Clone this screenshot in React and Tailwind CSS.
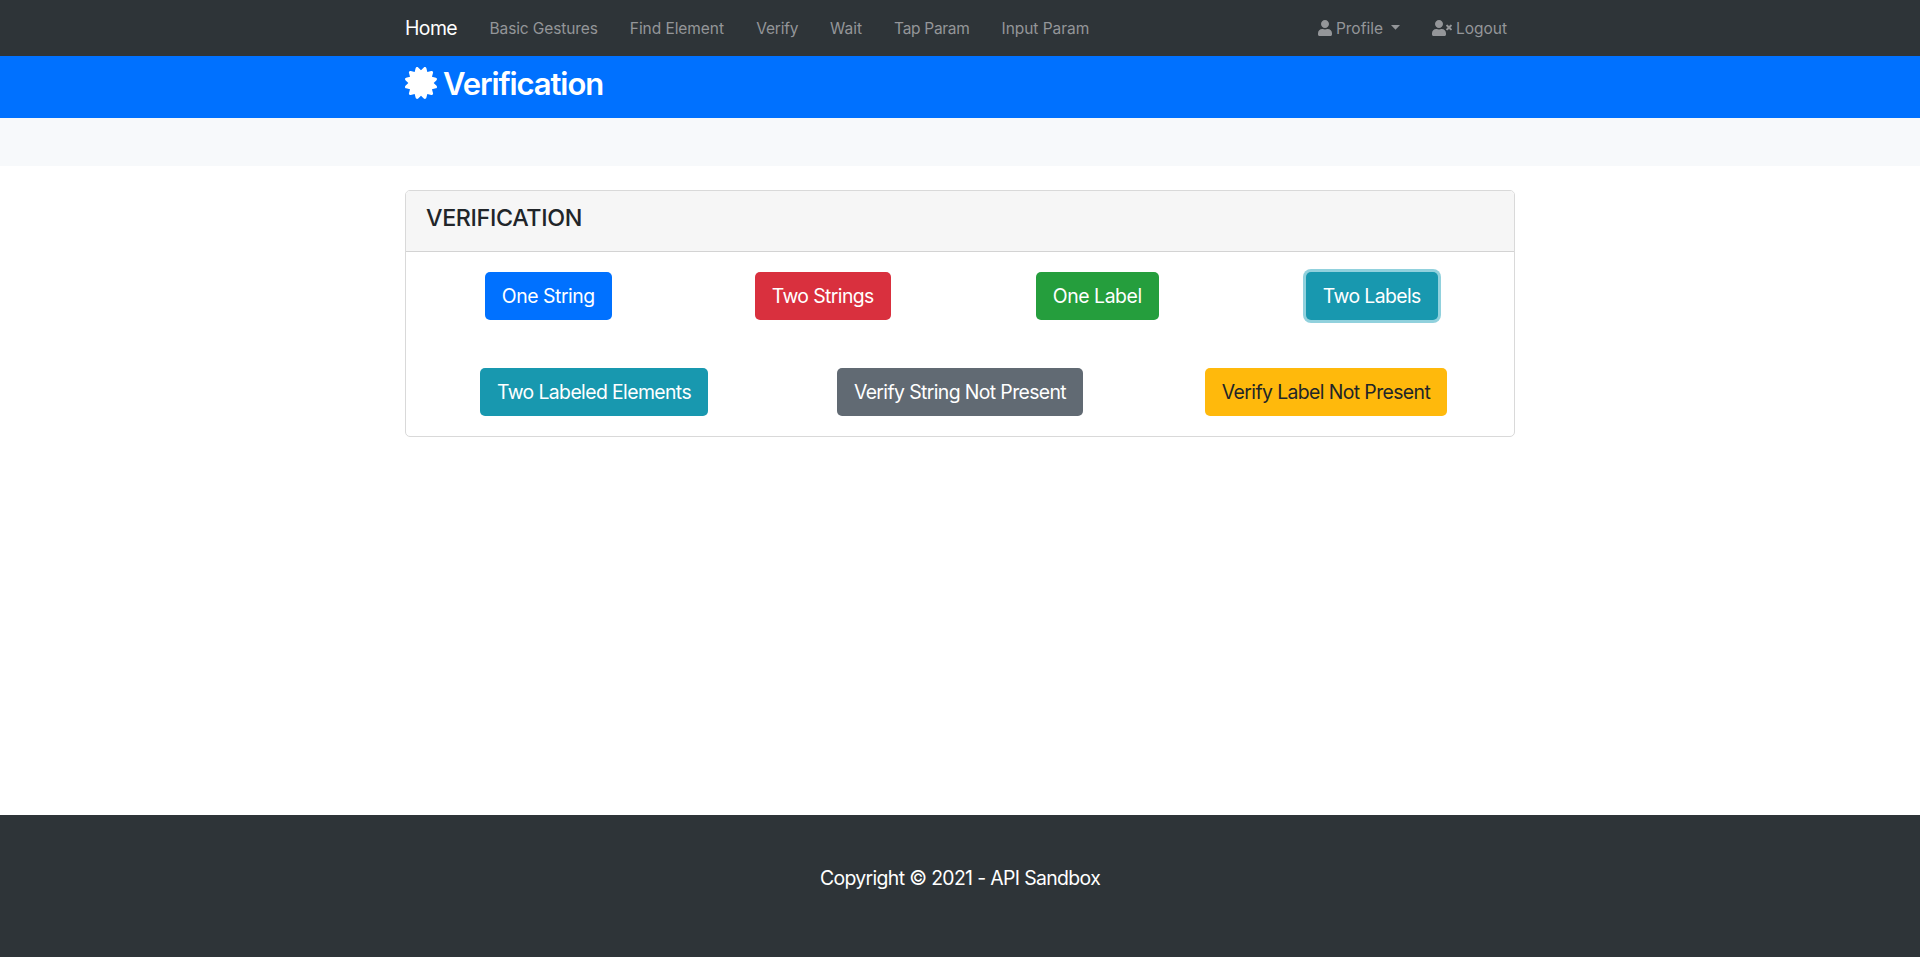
import { FaCertificate, FaUser, FaUserTimes } from "react-icons/fa";

const navLinks = [
  { label: "Basic Gestures", style: "w-[108.3px] tracking-[-0.11px]" },
  { label: "Find Element", style: "w-[94.5px] tracking-[-0.06px]" },
  { label: "Verify", style: "w-[41.8px] tracking-[-0.23px]" },
  { label: "Wait", style: "w-[32px]" },
  { label: "Tap Param", style: "w-[75.5px] tracking-[-0.3px]" },
  { label: "Input Param", style: "w-[88.2px] tracking-[-0.05px]" },
];

const topButtons = [
  { label: "One String", style: "w-[127px] bg-[#0071ff] text-white tracking-[-0.45px]" },
  { label: "Two Strings", style: "w-[136px] bg-[#d9303e] text-white tracking-[-0.6px]" },
  { label: "One Label", style: "w-[123px] bg-[#259e3d] text-white tracking-[-0.42px]" },
  {
    label: "Two Labels",
    style: "w-[132px] bg-[#1898af] text-white tracking-[-0.59px] ring-3 ring-[#91d1dd]",
  },
];

const bottomButtons = [
  { label: "Two Labeled Elements", style: "w-[228px] bg-[#1898af] text-white tracking-[-0.6px]" },
  { label: "Verify String Not Present", style: "w-[246px] bg-[#616a73] text-white tracking-[-0.61px]" },
  { label: "Verify Label Not Present", style: "w-[242px] bg-[#ffb90c] text-[#212529] tracking-[-0.6px]" },
];

function Button({ label, style }) {
  return (
    <div className="flex justify-center">
      <button type="button" className={`h-12 rounded-[5px] text-center text-[19.4px] leading-[48px] whitespace-nowrap ${style}`}>
        {label}
      </button>
    </div>
  );
}

export default function App() {
  return (
    <div className="flex h-[957px] flex-col bg-white font-['Inter',sans-serif] text-[#212529]">
      <nav className="h-14 bg-[#2e3438]">
        <div className="mx-auto flex h-full w-[1110px] items-center text-[15.5px] whitespace-nowrap text-[#949699]">
          <a className="mr-8 w-[52.5px] pt-0.5 text-[19.4px] tracking-[-0.55px] text-white">Home</a>
          <div className="flex gap-8 pt-0.5">
            {navLinks.map((link) => (
              <a key={link.label} className={link.style}>{link.label}</a>
            ))}
          </div>
          <div className="mr-2 ml-auto flex items-center">
            <a className="flex items-center">
              <FaUser className="mr-1 h-4 w-3.5" />
              <span className="w-[47px] pt-0.5">Profile</span>
              <svg className="mt-[-2px] ml-2 h-[5px] w-[9px]" viewBox="0 0 9 5" fill="currentColor">
                <path d="M0 0h9L4.5 4.8z" />
              </svg>
            </a>
            <a className="ml-8 flex items-center">
              <FaUserTimes className="mr-1 h-4 w-5" />
              <span className="pt-0.5">Logout</span>
            </a>
          </div>
        </div>
      </nav>

      <header className="h-[62px] bg-[#0071ff] text-white">
        <div className="mx-auto flex w-[1110px] items-start pt-[11px]">
          <FaCertificate className="size-8" />
          <h1 className="mt-[-2px] ml-1.5 text-[31px] leading-[38px] font-semibold tracking-[-1.1px]">Verification</h1>
        </div>
      </header>
      <div className="h-12 bg-[#f7f9fb]" />

      <main className="grow pt-6">
        <section className="mx-auto h-[247px] w-[1110px] rounded-[5px] border border-[#d9d9d9]">
          <div className="h-[61px] rounded-t-[4px] border-b border-[#d3d3d3] bg-[#f6f6f6] px-5 pt-3">
            <h4 className="text-[23.3px] leading-[29px] font-medium tracking-[-0.35px]">VERIFICATION</h4>
          </div>
          <div className="px-[5px] pt-5">
            <div className="grid grid-cols-4">
              {topButtons.map((b) => <Button key={b.label} {...b} />)}
            </div>
            <div className="mt-12 grid grid-cols-3">
              {bottomButtons.map((b) => <Button key={b.label} {...b} />)}
            </div>
          </div>
        </section>
      </main>

      <footer className="h-[142px] bg-[#2e3438] pt-12 text-center text-[19.4px] leading-[30px] tracking-[-0.63px] text-white">
        Copyright © 2021 - API Sandbox
      </footer>
    </div>
  );
}
